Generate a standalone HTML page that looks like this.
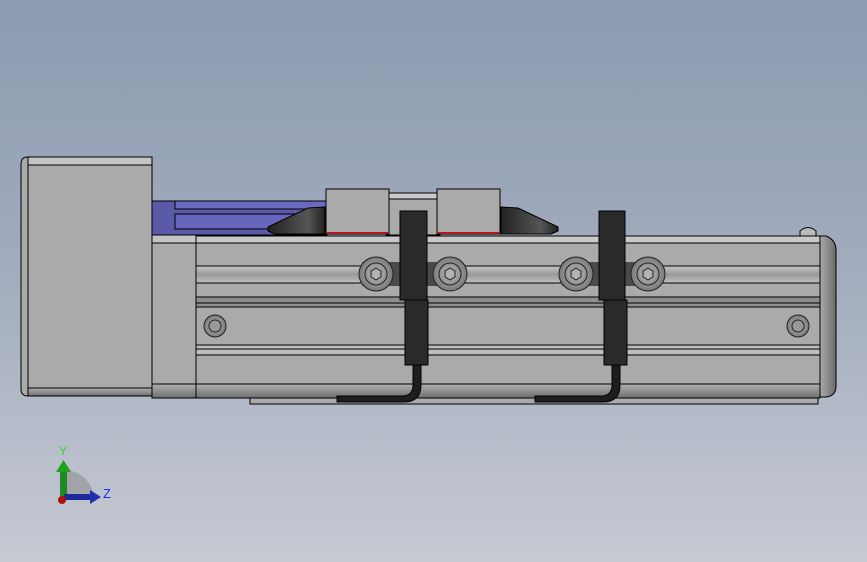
<!DOCTYPE html>
<html><head><style>
html,body{margin:0;padding:0;}
body{width:867px;height:562px;overflow:hidden;background:linear-gradient(#8c99af,#a3adbe 50%,#c6cad3);font-family:"Liberation Sans",sans-serif;}
svg{display:block;}
</style></head><body>
<svg width="867" height="562" viewBox="0 0 867 562" xmlns="http://www.w3.org/2000/svg">
<defs>
<linearGradient id="rail" x1="0" y1="0" x2="0" y2="1"><stop offset="0" stop-color="#c8c8c8"/><stop offset="0.5" stop-color="#9a9a9a"/><stop offset="1" stop-color="#c0c0c0"/></linearGradient>
<linearGradient id="bot" x1="0" y1="0" x2="0" y2="1"><stop offset="0" stop-color="#b0b0b0"/><stop offset="1" stop-color="#6e6e6e"/></linearGradient>
<linearGradient id="cap" x1="0" y1="0" x2="1" y2="0"><stop offset="0" stop-color="#aaa"/><stop offset="1" stop-color="#6a6a6a"/></linearGradient>
<linearGradient id="wedgeL" x1="0" y1="0" x2="1" y2="0"><stop offset="0" stop-color="#222"/><stop offset="0.7" stop-color="#555"/><stop offset="1" stop-color="#222"/></linearGradient>
<radialGradient id="bolt"><stop offset="0" stop-color="#bbb"/><stop offset="1" stop-color="#7a7a7a"/></radialGradient>
</defs>
<g stroke="#000" stroke-width="1">
<rect x="250" y="396" width="568" height="8" fill="#aaa"/>
<rect x="152" y="201" width="175" height="34" fill="#5a5aa8"/>
<rect x="175" y="201" width="152" height="8" fill="#6a6ac0"/>
<rect x="175" y="214" width="152" height="15" fill="#6666bc"/>
<rect x="388" y="193" width="52" height="6" fill="#ccc"/>
<rect x="386" y="199" width="54" height="36" fill="#aaa"/>
<rect x="326" y="189" width="63" height="45" fill="#aaa"/>
<rect x="437" y="189" width="63" height="45" fill="#aaa"/>
<line x1="327" y1="233" x2="388" y2="233" stroke="#b01818" stroke-width="2"/>
<line x1="438" y1="233" x2="499" y2="233" stroke="#b01818" stroke-width="2"/>
<path d="M268 227 L268 231 L275 234 L325 234 L325 207 L308 208 Z" fill="url(#wedgeL)"/>
<path d="M558 227 L558 231 L551 234 L501 234 L501 207 L518 208 Z" fill="url(#wedgeL)"/>
<path d="M28 157 L152 157 L152 396 L28 396 Q21 396 21 389 L21 164 Q21 157 28 157 Z" fill="#aaa"/>
<rect x="28" y="157" width="124" height="8" fill="#c4c4c4"/>
<rect x="28" y="388" width="124" height="8" fill="url(#bot)"/>
<line x1="28" y1="157" x2="28" y2="396"/>
<rect x="152" y="235" width="44" height="163" fill="#aaa"/>
<rect x="152" y="235" width="44" height="8" fill="#c4c4c4"/>
<rect x="152" y="384" width="44" height="14" fill="url(#bot)"/>
<rect x="196" y="236" width="624" height="162" fill="#aaa"/>
<rect x="196" y="236" width="624" height="7" fill="#c8c8c8"/>
<rect x="196" y="266" width="624" height="17" fill="url(#rail)"/>
<rect x="196" y="297" width="624" height="10" fill="#8e8e8e"/>
<line x1="196" y1="303" x2="820" y2="303"/>
<rect x="196" y="345" width="624" height="10" fill="#bdbdbd"/>
<line x1="196" y1="349" x2="820" y2="349"/>
<rect x="196" y="384" width="624" height="14" fill="url(#bot)"/>
<path d="M820 236 L826 236 Q836 240 836 250 L836 386 Q836 396 826 397 L820 397 Z" fill="url(#cap)"/>
<line x1="820" y1="236" x2="820" y2="398"/>
<path d="M800 236 L800 231 Q808 224 816 231 L816 236 Z" fill="#bbb"/>
<rect x="362" y="262" width="96" height="24" fill="#4a4a4a" stroke="none"/>
<rect x="562" y="262" width="96" height="24" fill="#4a4a4a" stroke="none"/>
<g fill="url(#bolt)" stroke="#222">
<circle cx="376" cy="274" r="17"/><circle cx="376" cy="274" r="11" fill="none"/><polygon points="376,268 381,271 381,277 376,280 371,277 371,271" fill="none"/>
<circle cx="450" cy="274" r="17"/><circle cx="450" cy="274" r="11" fill="none"/><polygon points="450,268 455,271 455,277 450,280 445,277 445,271" fill="none"/>
<circle cx="576" cy="274" r="17"/><circle cx="576" cy="274" r="11" fill="none"/><polygon points="576,268 581,271 581,277 576,280 571,277 571,271" fill="none"/>
<circle cx="648" cy="274" r="17"/><circle cx="648" cy="274" r="11" fill="none"/><polygon points="648,268 653,271 653,277 648,280 643,277 643,271" fill="none"/>
</g>
<g fill="url(#bolt)" stroke="#222">
<circle cx="215" cy="326" r="11"/><circle cx="215" cy="326" r="6" fill="#999"/>
<circle cx="798" cy="326" r="11"/><circle cx="798" cy="326" r="6" fill="#999"/>
</g>
<g fill="#2a2a2a">
<rect x="400" y="211" width="27" height="89"/>
<rect x="405" y="300" width="23" height="65"/>
<path d="M413 365 L413 385 Q413 396 402 396 L337 396 L337 402 L404 402 Q421 402 421 385 L421 365 Z" fill="#1e1e1e"/>
<rect x="599" y="211" width="26" height="89"/>
<rect x="604" y="300" width="23" height="65"/>
<path d="M612 365 L612 385 Q612 396 601 396 L535 396 L535 402 L603 402 Q620 402 620 385 L620 365 Z" fill="#1e1e1e"/>
</g>
</g>
<path d="M64 500 L64 470 A30 30 0 0 1 94 500 Z" fill="#9a9da3" opacity="0.8"/>
<rect x="60" y="470" width="7" height="30" fill="#1f8a1f"/>
<polygon points="56,472 63.5,460 71,472" fill="#22a022"/>
<rect x="64" y="494" width="28" height="6" fill="#1a2a9a"/>
<polygon points="90,490 101,497 90,504" fill="#2030b0"/>
<circle cx="62" cy="500" r="4" fill="#b01010"/>
<text x="59" y="455" font-size="12" fill="#2fd02f">Y</text>
<text x="103" y="498" font-size="13" fill="#1a2aff">Z</text>
</svg>
</body></html>
